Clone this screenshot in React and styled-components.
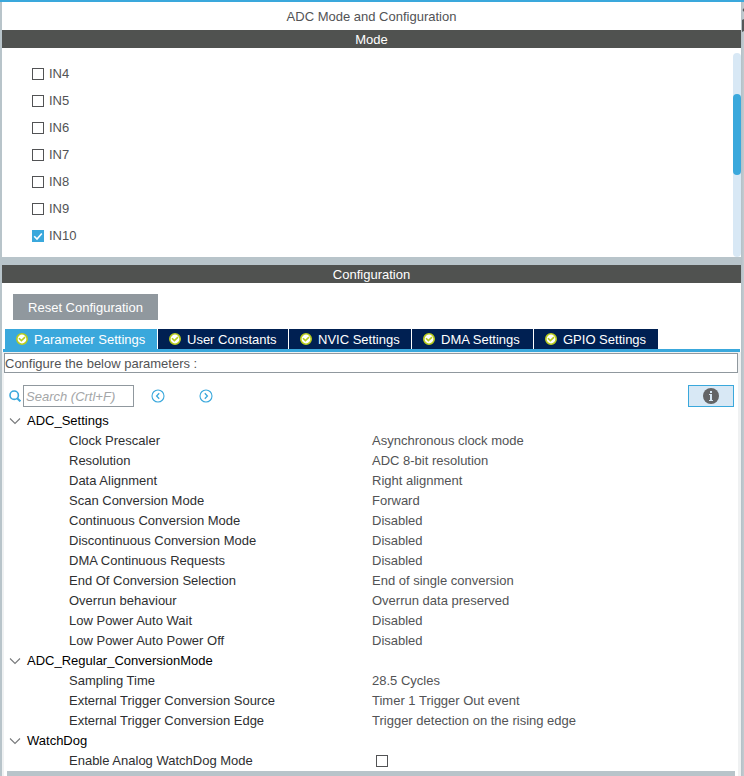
import React, { useState } from "react";
import styled, { createGlobalStyle } from "styled-components";

const c = {
  blue: "#3aa8dc",
  navy: "#002052",
  bar: "#505250",
  frame: "#b8c4ca",
  pale: "#d8e8f5",
  grey: "#90989e",
  text: "#525355",
};

const GlobalStyle = createGlobalStyle`
  * { box-sizing: border-box; }
  body {
    margin: 0;
    background: #fff;
    color: ${c.text};
    font: 13px/19px "Liberation Sans", Arial, sans-serif;
  }
  button, input { font: inherit; }
`;

const Window = styled.main`
  position: relative;
  display: flex;
  flex-direction: column;
  min-height: 100vh;
  border-top: 2px solid ${c.blue};
  background: linear-gradient(${c.frame}, ${c.frame}) left / 2px 100% no-repeat,
    linear-gradient(to right, #b4bfc6, #c3ccd1) right / 3px 100% no-repeat;
  padding: 0 3px 0 2px;
`;

const EdgeMarks = styled.svg`
  position: absolute;
  top: 0;
  right: 0;
`;

const Title = styled.h1`
  margin: 0;
  padding-top: 1px;
  font-size: 13px;
  font-weight: 400;
  line-height: 27px;
  text-align: center;
`;

const SectionBar = styled.h2`
  margin: 0;
  padding-top: 1px;
  background: ${c.bar};
  color: #fff;
  font-size: 13px;
  font-weight: 400;
  line-height: 17px;
  text-align: center;
`;

const ModePanel = styled.section`
  display: flex;
  justify-content: space-between;
  border-bottom: 8px solid ${c.frame};
`;

const ChannelList = styled.div`
  display: flex;
  flex-direction: column;
  gap: 1px;
  padding: 13px 0 8px 30px;
`;

const ChannelLabel = styled.label`
  display: flex;
  align-items: center;
  gap: 5px;
  height: 26px;
  line-height: 20px;
`;

const CheckBox = styled.input`
  appearance: none;
  flex: none;
  width: 12px;
  height: 12px;
  margin: 0;
  border: 1px solid ${c.text};
  background: #fff;
  &:checked {
    border-color: ${c.blue};
    background: ${c.blue}
      url("data:image/svg+xml,%3Csvg xmlns='http://www.w3.org/2000/svg' viewBox='0 0 10 10'%3E%3Cpath d='M1.2 5.2 4 8 8.8 2.4' fill='none' stroke='white' stroke-width='1.6'/%3E%3C/svg%3E")
      center / 10px 10px no-repeat;
  }
`;

const ScrollTrack = styled.div`
  width: 8px;
  margin-top: 5px;
  padding-top: 41px;
  border-radius: 4px;
  background: ${c.pale};
`;

const ScrollThumb = styled.div`
  height: 81px;
  border-radius: 4px;
  background: ${c.blue};
`;

const ResetButton = styled.button`
  display: block;
  width: 145px;
  height: 26px;
  margin: 11px 11px 9px;
  padding: 1px 0 0;
  border: 0;
  background: ${c.grey};
  color: #fff;
`;

const TabStrip = styled.div`
  display: flex;
  gap: 1px;
  margin: 0 1px;
  padding-left: 2px;
  border-bottom: 3px solid ${c.blue};
`;

const Tab = styled.button`
  display: flex;
  align-items: center;
  gap: 6px;
  width: ${(p) => p.$width}px;
  height: 20px;
  padding: 0 0 0 11px;
  border: 0;
  background: ${(p) => (p.$active ? c.blue : c.navy)};
  color: #fff;
  white-space: nowrap;
`;

const TabBody = styled.div`
  flex: 1;
  display: flex;
  flex-direction: column;
  border: solid #eff1f2;
  border-width: 1px 3px 0 2px;
`;

const Hint = styled.p`
  margin: 0;
  padding-top: 1px;
  border: 1px solid ${c.grey};
  line-height: 17px;
`;

const SearchRow = styled.div`
  display: flex;
  align-items: center;
  height: 22px;
  margin: 12px 4px 3px 5px;
`;

const SearchInput = styled.input`
  width: 111px;
  height: 22px;
  margin: 0 16px 0 2px;
  padding: 0 2px;
  border: 1px solid ${c.grey};
  color: ${c.text};
  &::placeholder {
    color: #a4a6a8;
    font-style: italic;
    opacity: 1;
  }
`;

const StepButton = styled.button`
  display: grid;
  place-items: center;
  width: 16px;
  height: 16px;
  margin-right: 32px;
  padding: 0;
  border: 0;
  background: none;
`;

const InfoButton = styled.button`
  display: grid;
  place-items: center;
  width: 46px;
  height: 22px;
  margin-left: auto;
  padding: 0;
  border: 1px solid ${c.blue};
  background: ${c.pale};
`;

const Params = styled.table`
  width: 100%;
  border-collapse: collapse;
  table-layout: fixed;
`;

const NameColumn = styled.col`
  width: 368px;
`;

const GroupCell = styled.th`
  height: 20px;
  padding: 0 0 0 5px;
  color: #000;
  font-weight: 400;
  text-align: left;
`;

const GroupButton = styled.button`
  display: flex;
  align-items: center;
  gap: 6px;
  height: 20px;
  padding: 1px 0 0;
  border: 0;
  background: none;
  color: inherit;
`;

const NameCell = styled.th`
  height: 20px;
  padding: 1px 0 0 65px;
  color: #2e2f31;
  font-weight: 400;
  text-align: left;
`;

const ValueCell = styled.td`
  height: 20px;
  padding: 1px 0 0;
`;

const ToggleSlot = styled.div`
  display: flex;
  padding-left: 4px;
`;

const BottomBar = styled.div`
  flex: 1;
  min-height: 5px;
  margin: 1px 3px 0;
  background: ${c.frame};
`;

const TickIcon = () => (
  <svg width="12" height="12" viewBox="0 0 12 12" aria-hidden="true">
    <circle cx="6" cy="6" r="5.2" fill="#fff" stroke="#b9cc1c" strokeWidth="1.6" />
    <path d="M3 5.2 5.4 7.6 9 4.2" fill="none" stroke="#b9cc1c" strokeWidth="1.6" />
  </svg>
);

const SearchIcon = () => (
  <svg width="12" height="12" viewBox="0 0 12 12" aria-hidden="true">
    <circle cx="5.2" cy="5.2" r="4.2" fill="none" stroke={c.blue} strokeWidth="1.6" />
    <path d="m8.2 8.2 3.2 3.2" stroke={c.blue} strokeWidth="2" />
  </svg>
);

const StepIcon = ({ d }) => (
  <svg width="14" height="14" viewBox="0 0 14 14" aria-hidden="true">
    <circle cx="7" cy="7" r="6" fill="none" stroke={c.blue} strokeWidth="1.1" />
    <path d={d} fill="none" stroke={c.blue} strokeWidth="1.3" />
  </svg>
);

const InfoIcon = () => (
  <svg width="16" height="16" viewBox="0 0 16 16" aria-hidden="true">
    <circle cx="8" cy="8" r="8" fill="#636466" />
    <path d="M7 3h2v2H7zM6 6h3v6h1v1H6v-1h1V7H6z" fill={c.pale} />
  </svg>
);

const ChevronIcon = () => (
  <svg width="12" height="8" viewBox="0 0 12 8" aria-hidden="true">
    <path d="m1 1.5 5 5 5-5" fill="none" stroke="#77797b" strokeWidth="1.1" />
  </svg>
);

const channels = ["IN4", "IN5", "IN6", "IN7", "IN8", "IN9", "IN10"];

const tabs = [
  ["Parameter Settings", 152],
  ["User Constants", 130],
  ["NVIC Settings", 122],
  ["DMA Settings", 121],
  ["GPIO Settings", 124],
];

const groups = [
  {
    name: "ADC_Settings",
    rows: [
      ["Clock Prescaler", "Asynchronous clock mode"],
      ["Resolution", "ADC 8-bit resolution"],
      ["Data Alignment", "Right alignment"],
      ["Scan Conversion Mode", "Forward"],
      ["Continuous Conversion Mode", "Disabled"],
      ["Discontinuous Conversion Mode", "Disabled"],
      ["DMA Continuous Requests", "Disabled"],
      ["End Of Conversion Selection", "End of single conversion"],
      ["Overrun behaviour", "Overrun data preserved"],
      ["Low Power Auto Wait", "Disabled"],
      ["Low Power Auto Power Off", "Disabled"],
    ],
  },
  {
    name: "ADC_Regular_ConversionMode",
    rows: [
      ["Sampling Time", "28.5 Cycles"],
      ["External Trigger Conversion Source", "Timer 1 Trigger Out event"],
      ["External Trigger Conversion Edge", "Trigger detection on the rising edge"],
    ],
  },
  { name: "WatchDog", rows: [["Enable Analog WatchDog Mode", false]] },
];

function ParamGroup({ name, rows }) {
  const [open, setOpen] = useState(true);
  return (
    <tbody>
      <tr>
        <GroupCell colSpan={2} scope="rowgroup">
          <GroupButton aria-expanded={open} onClick={() => setOpen(!open)}>
            <ChevronIcon />
            {name}
          </GroupButton>
        </GroupCell>
      </tr>
      {open &&
        rows.map(([label, value]) => (
          <tr key={label}>
            <NameCell scope="row">
              {typeof value === "boolean" ? <label htmlFor="watchdog">{label}</label> : label}
            </NameCell>
            <ValueCell>
              {typeof value === "boolean" ? (
                <ToggleSlot>
                  <CheckBox type="checkbox" id="watchdog" defaultChecked={value} />
                </ToggleSlot>
              ) : (
                value
              )}
            </ValueCell>
          </tr>
        ))}
    </tbody>
  );
}

export default function App() {
  const [active, setActive] = useState(0);
  return (
    <>
      <GlobalStyle />
      <Window>
        <EdgeMarks width="3" height="32" viewBox="0 0 3 32" aria-hidden="true">
          <path d="M3 6 1.5 8 3 10zM3 17 1 18v12l2-1z" fill="#555759" />
        </EdgeMarks>
        <Title>ADC Mode and Configuration</Title>
        <SectionBar>Mode</SectionBar>
        <ModePanel>
          <ChannelList>
            {channels.map((name) => (
              <ChannelLabel key={name}>
                <CheckBox type="checkbox" defaultChecked={name === "IN10"} />
                {name}
              </ChannelLabel>
            ))}
          </ChannelList>
          <ScrollTrack>
            <ScrollThumb />
          </ScrollTrack>
        </ModePanel>
        <SectionBar>Configuration</SectionBar>
        <ResetButton>Reset Configuration</ResetButton>
        <TabStrip role="tablist">
          {tabs.map(([name, width], i) => (
            <Tab
              key={name}
              role="tab"
              aria-selected={i === active}
              $active={i === active}
              $width={width}
              onClick={() => setActive(i)}
            >
              <TickIcon />
              {name}
            </Tab>
          ))}
        </TabStrip>
        <TabBody>
          <Hint>Configure the below parameters :</Hint>
          <SearchRow>
            <SearchIcon />
            <SearchInput type="text" aria-label="Search" placeholder="Search (Crtl+F)" />
            <StepButton aria-label="Previous">
              <StepIcon d="M8.2 4.2 5.6 7l2.6 2.8" />
            </StepButton>
            <StepButton aria-label="Next">
              <StepIcon d="M5.8 4.2 8.4 7 5.8 9.8" />
            </StepButton>
            <InfoButton aria-label="Information">
              <InfoIcon />
            </InfoButton>
          </SearchRow>
          <Params>
            <colgroup>
              <NameColumn />
              <col />
            </colgroup>
            {groups.map((group) => (
              <ParamGroup key={group.name} {...group} />
            ))}
          </Params>
          <BottomBar />
        </TabBody>
      </Window>
    </>
  );
}
